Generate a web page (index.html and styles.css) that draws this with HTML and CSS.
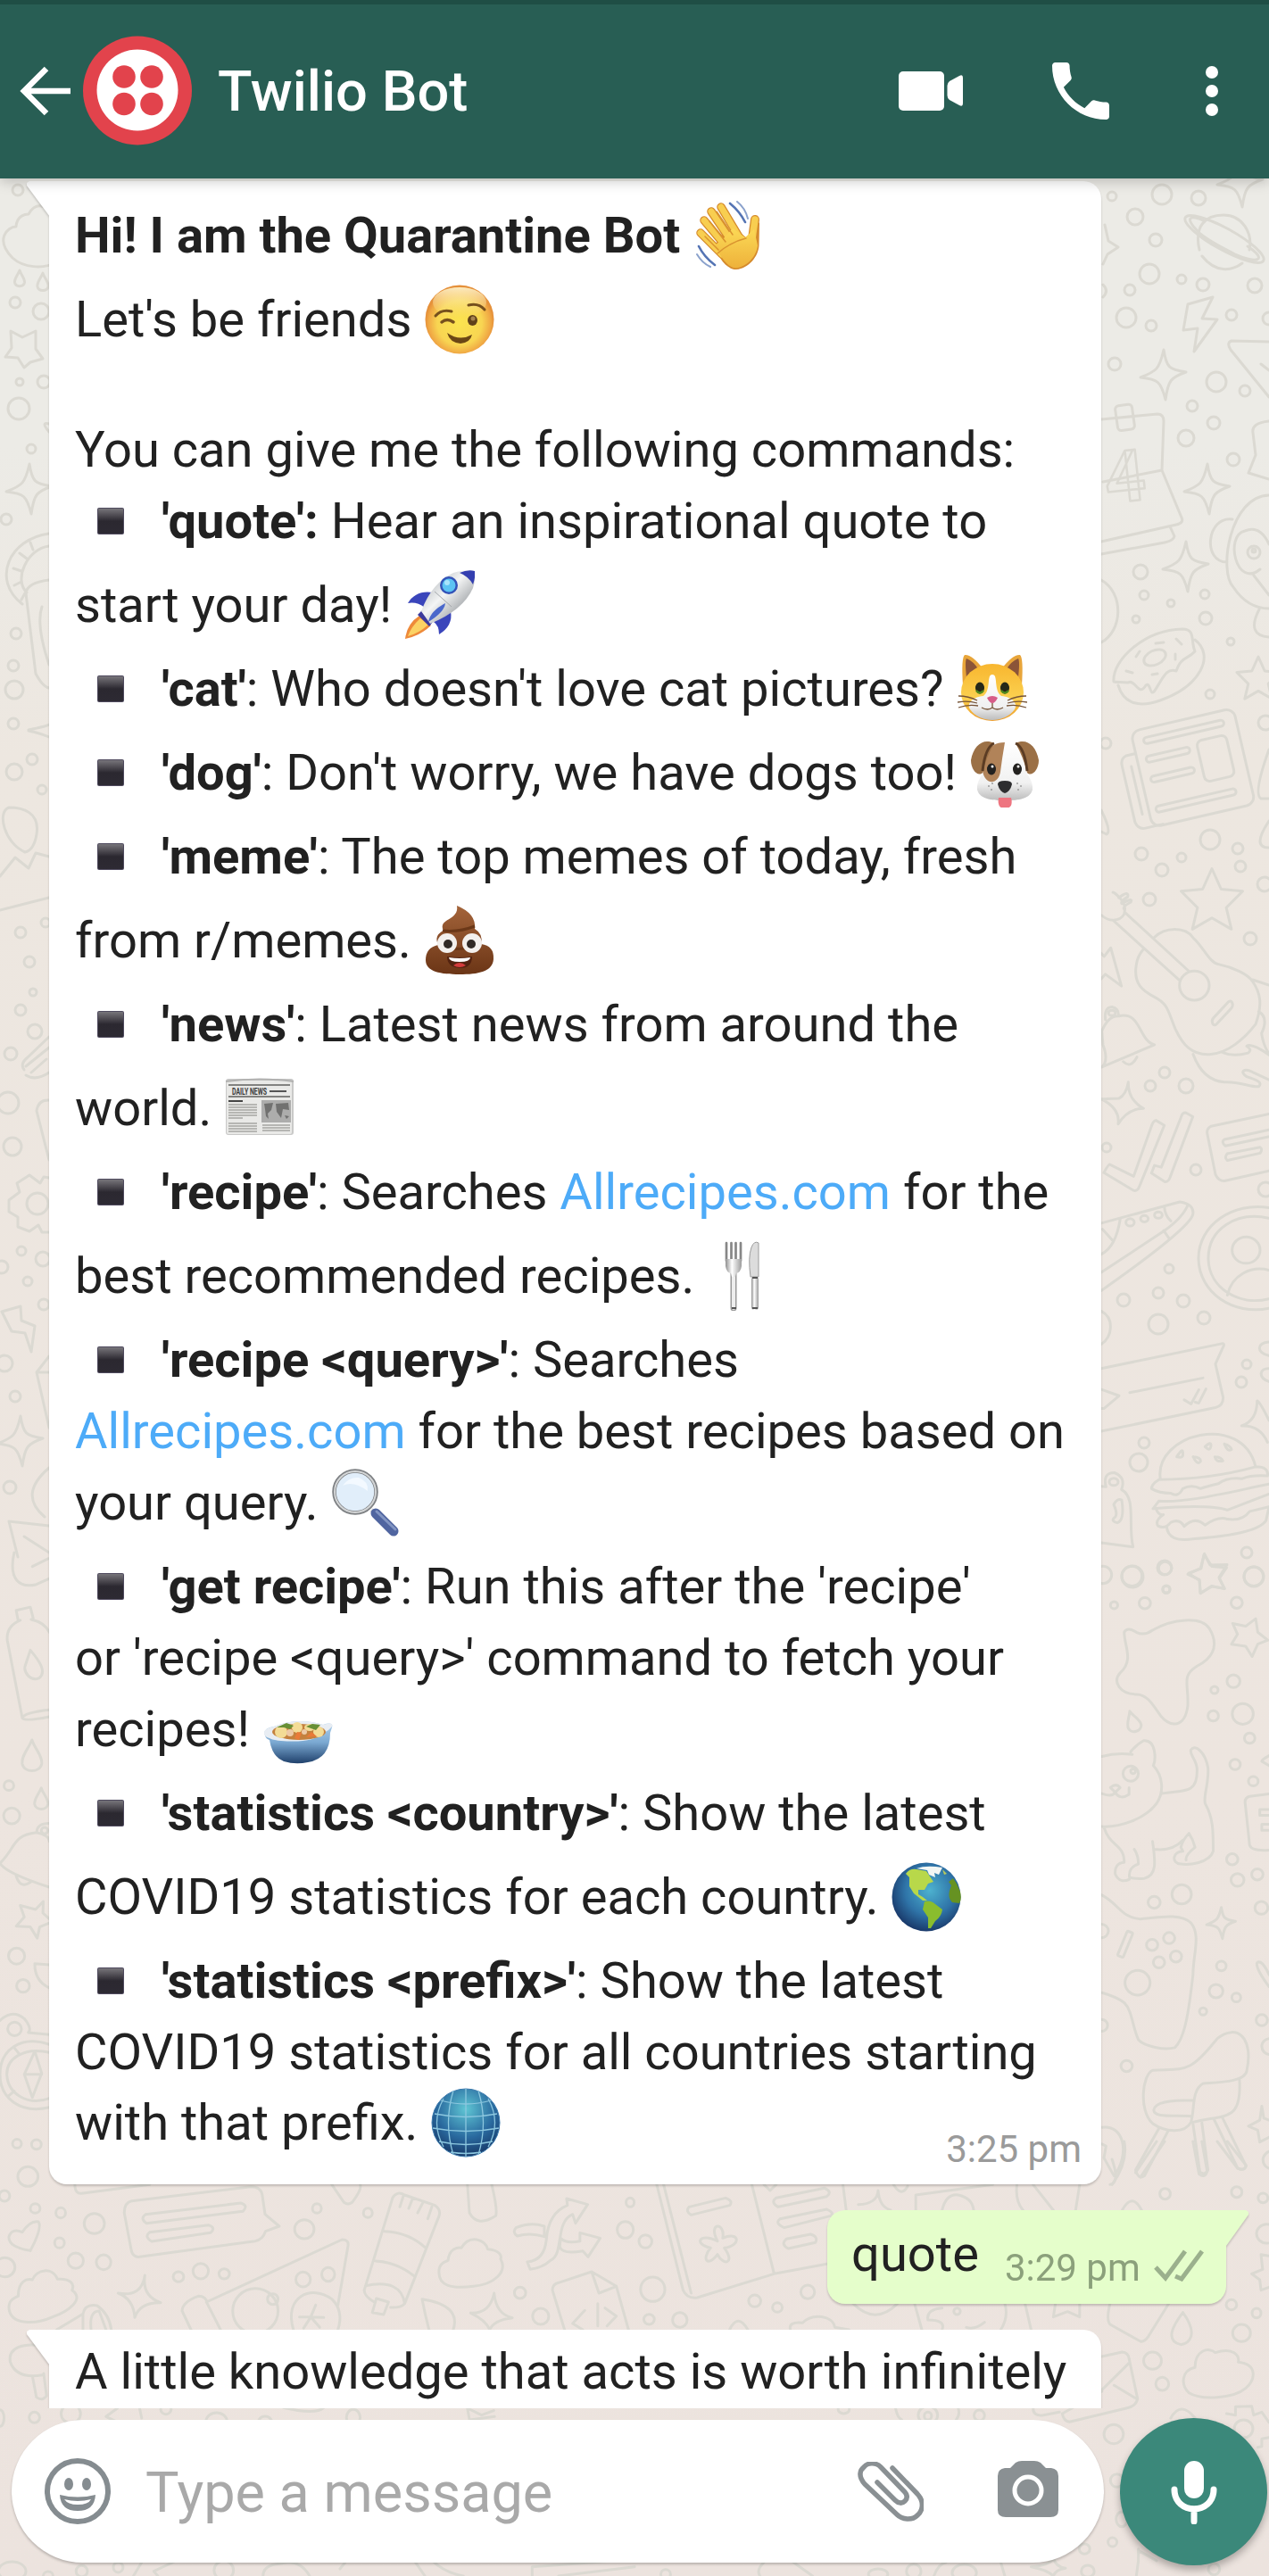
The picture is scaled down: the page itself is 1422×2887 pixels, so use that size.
FILE: index.html
```html
<!DOCTYPE html>
<html lang="en">
<head>
<meta charset="utf-8">
<title>Twilio Bot</title>
<link rel="stylesheet" href="styles.css">
</head>
<body>
<svg class="wallpaper" width="1422" height="2887" viewBox="0 0 1422 2887" aria-hidden="true">
  <defs>
    <path id="spark" d="M0-28C3-8 6-6 25-3C8 3 5 6 2 28C-3 8-6 5-26 3C-8-4-5-6 0-28Z"/>
    <path id="star" d="M0-30L9-10L30-8L14 8L19 29L0 18L-19 29L-14 8L-30-8L-9-10Z"/>
    <path id="cloud" d="M-32 25C-52 5-38-10-28-10C-27-23-17-24-14-24C-5-40 10-32 12-22C25-22 29-12 26-8C38-2 38 22 18 30C2 38-20 36-32 25Z"/>
    <path id="drop" d="M0-18C3-8 12 0 11 9C9 20-9 20-11 9C-12 0-4-8 0-18Z"/>
  </defs>
  <!-- right edge, upper part -->
  <g>
    <circle cx="1246" cy="220" r="5"/><circle cx="1302" cy="218" r="11"/><circle cx="1343" cy="222" r="8"/><circle cx="1272" cy="243" r="9"/><circle cx="1295" cy="269" r="7"/><circle cx="1288" cy="307" r="11"/><circle cx="1324" cy="313" r="5"/><circle cx="1348" cy="319" r="7"/><circle cx="1406" cy="320" r="8"/><circle cx="1266" cy="325" r="6"/><circle cx="1262" cy="356" r="11"/><circle cx="1290" cy="365" r="6"/><circle cx="1380" cy="353" r="6"/><circle cx="1249" cy="408" r="7"/><circle cx="1422" cy="357" r="7"/>
    <circle cx="1363" cy="428" r="11"/><circle cx="1395" cy="438" r="6"/><circle cx="1336" cy="455" r="6"/><circle cx="1360" cy="474" r="7"/><circle cx="1329" cy="491" r="9"/><circle cx="1382" cy="515" r="7"/><circle cx="1278" cy="641" r="8"/><circle cx="1282" cy="667" r="5"/><circle cx="1312" cy="676" r="4"/><circle cx="1350" cy="666" r="5"/><circle cx="1351" cy="693" r="7"/><circle cx="1273" cy="694" r="4"/><circle cx="1379" cy="719" r="4"/><circle cx="1356" cy="778" r="5"/><circle cx="1418" cy="810" r="8"/><circle cx="1239" cy="833" r="6"/><circle cx="1356" cy="941" r="11"/><circle cx="1279" cy="957" r="7"/><circle cx="1324" cy="961" r="5"/><circle cx="1387" cy="951" r="6"/><circle cx="1302" cy="975" r="7"/><circle cx="1390" cy="971" r="6"/><circle cx="1417" cy="991" r="8"/><circle cx="1288" cy="1008" r="7"/><circle cx="1401" cy="1052" r="7"/>
    <path d="M1344 280C1338 254 1350 241 1371 241C1392 241 1404 261 1400 280M1347 287C1362 306 1380 304 1392 295"/>
    <ellipse cx="1372" cy="268" rx="50" ry="12" transform="rotate(29 1372 268)"/><path d="M1345 262C1325 243 1334 240 1350 248M1398 276C1422 292 1408 296 1384 285C1366 276 1352 268 1345 262"/>
    <path d="M1331 341L1359 333L1347 357L1364 358L1338 394L1342 368L1326 370Z"/>
    <use href="#spark" x="1390" y="204"/><use href="#spark" x="1304" y="420"/><use href="#spark" x="1353" y="548"/><use href="#spark" x="1329" y="635"/>
    <path d="M1238 252L1242 270L1253 277L1241 285L1236 296M1236 319Q1243 326 1236 333"/>
    <path d="M1422 383L1380 382Q1374 384 1379 392L1422 445M1422 415L1413 408"/>
    <path d="M1234 470L1297 464Q1304 464 1304 472L1302 527L1324 580Q1327 586 1318 588L1234 607M1311 590L1316 601Q1315 606 1305 608L1234 621M1302 527L1236 540"/>
    <rect x="1251" y="454" width="19" height="28" rx="4" transform="rotate(-8 1260 468)"/>
    <text x="1238" y="562" class="doodle-num" transform="rotate(-6 1260 540)">4</text>
    <path d="M1422 472Q1402 474 1404 485L1407 510L1399 530L1422 537M1422 555C1378 556 1365 640 1382 658Q1398 682 1422 682M1381 582C1352 578 1347 630 1375 630M1412 638C1385 660 1372 600 1395 595Q1412 588 1422 610M1405 645L1422 667M1411 683Q1396 712 1422 714"/>
    <circle cx="1405" cy="619" r="7"/><circle cx="1405" cy="617" r="2"/>
    <path d="M1234 650C1260 665 1258 707 1234 720"/>
    <path d="M1248 764C1246 740 1282 706 1325 705C1340 705 1334 718 1339 730C1330 740 1324 735 1318 752C1308 748 1304 758 1294 774C1288 782 1290 764 1284 768C1276 782 1272 760 1264 765C1258 764 1252 765 1248 764ZM1339 717C1362 735 1345 769 1300 785C1272 795 1258 785 1253 768"/>
    <ellipse cx="1294" cy="737" rx="13" ry="8" transform="rotate(-25 1294 737)"/><path d="M1295 721L1304 720M1318 716L1324 722M1273 736L1277 730M1262 752L1269 754M1291 756L1297 755M1317 733L1317 739"/>
    <use href="#star" transform="translate(1410 760) scale(.8)"/>
    <g transform="rotate(-13 1330 862)"><rect x="1278" y="807" width="118" height="110" rx="10"/><path d="M1278 832H1267Q1260 834 1260 842V907Q1262 916 1270 916H1290M1270 845V900"/><rect x="1290" y="817" width="92" height="7" rx="3.500"/><rect x="1288" y="838" width="50" height="7" rx="3.500"/><rect x="1288" y="861" width="50" height="7" rx="3.500"/><rect x="1347" y="834" width="34" height="47" rx="6"/><rect x="1286" y="895" width="92" height="7" rx="3.500"/></g>
    <path d="M1234 908Q1246 932 1240 935L1234 932M1422 840Q1404 890 1413 895H1422M1422 920Q1402 950 1422 950"/>
    <use href="#star" transform="translate(1358 1008) scale(1.15)"/>
  </g>
  <!-- guitar, ticks, clarinet, burger -->
  <g>
    <circle cx="1289" cy="1217" r="6"/><circle cx="1305" cy="1202" r="6"/><circle cx="1329" cy="1217" r="8"/><circle cx="1240" cy="1286" r="5"/><circle cx="1340" cy="1311" r="6"/><circle cx="1310" cy="1422" r="5"/><circle cx="1259" cy="1457" r="7"/><circle cx="1298" cy="1449" r="6"/><circle cx="1326" cy="1458" r="7"/><circle cx="1349" cy="1477" r="7"/><circle cx="1298" cy="1484" r="11"/><circle cx="1397" cy="1529" r="5"/><circle cx="1391" cy="1549" r="6"/><circle cx="1282" cy="1617" r="6"/><circle cx="1276" cy="1639" r="10"/><circle cx="1397" cy="1740" r="6"/><circle cx="1305" cy="1757" r="8"/><circle cx="1269" cy="1767" r="12"/><circle cx="1405" cy="1767" r="11"/><circle cx="1307" cy="1781" r="4"/><circle cx="1418" cy="1333" r="8"/>
    <g transform="translate(1222 1000) scale(.33333 .5102)">
      <path d="M36 50C70 70 115 60 115 40C120 20 80 0 75 0M95 12Q130-5 125 10Q100 20 105 25Q145 10 135 22Q110 30 112 36M115 44L330 173M80 64L300 194M213 100C250 75 320 75 345 100C380 120 400 155 430 158C480 165 530 180 545 196C570 220 580 245 555 290C520 320 460 355 400 356C340 358 310 335 285 300C260 260 260 245 215 230C170 215 150 200 152 170C155 145 165 135 178 125M545 192L600 204M345 356C370 400 410 415 450 417C500 415 535 428 565 427C580 418 560 412 525 405C500 395 515 385 545 395L600 412M445 352Q480 362 530 353Q545 345 525 338Q540 330 600 357M565 262Q600 275 575 310Q580 335 600 355"/>
      <ellipse cx="349" cy="205" rx="50" ry="32"/><rect x="403" y="257" width="80" height="17" rx="10" transform="rotate(-35 443 265)"/>
      <path d="M36 190L50 180L104 206L68 122L46 141L36 134M38 305Q60 270 95 272C170 260 160 325 215 335L38 384Q62 370 42 335ZM110 372Q135 388 156 362M50 280Q45 253 72 252Q96 255 94 272"/><ellipse cx="72" cy="265" rx="12" ry="6"/>
      <path d="M36 454L95 453Q120 445 127 417Q125 455 178 475Q125 475 93 509Q100 475 36 454Z"/>
      <path d="M45 616L145 655Q158 658 165 645L248 512L220 501Q212 502 207 510L145 624L65 598Q60 598 45 616M205 617L250 636Q262 637 268 625L344 493L320 484Q308 484 305 493L238 604L215 600Z"/>
      <path d="M600 487L405 514Q388 520 393 532L420 620Q430 634 450 634L600 612M600 522L450 543Q438 548 453 557L598 537M460 574L570 560Q580 564 570 573L460 589Q448 583 460 574"/>
      <path d="M36 727L300 680Q350 685 344 708Q330 740 36 875M36 835L245 745Q310 715 328 686M248 690Q250 710 270 722M246 743L266 762M100 717Q85 780 36 795M40 740L73 764"/><ellipse cx="133" cy="725" rx="14" ry="8"/><ellipse cx="181" cy="717" rx="13" ry="7"/><ellipse cx="228" cy="709" rx="13" ry="7"/>
      <path d="M600 693C480 680 362 730 363 805C365 880 480 930 600 914M600 716C490 700 395 740 396 805C398 870 500 910 600 893M460 885C475 840 540 820 600 830"/><ellipse cx="523" cy="786" rx="47" ry="29"/>
      <path d="M36 920C80 935 75 975 36 993M36 1046L445 991Q452 992 445 1000L420 1036L446 1110Q446 1128 420 1132L36 1184M36 1092L96 1106L45 1134L36 1134M132 1099L378 1067M315 1115L338 1124L364 1093M352 1120L364 1122L388 1091"/>
      <path d="M600 988C560 990 555 1010 600 1018M600 1046C570 1045 560 1065 600 1075M508 1172Q560 1160 560 1117Q570 1120 600 1160M508 1172Q570 1170 595 1208"/>
      <path d="M235 1290C210 1190 510 1140 555 1262M230 1290Q400 1290 555 1262Q600 1262 595 1282Q540 1280 510 1288Q460 1284 430 1299Q390 1305 370 1310Q340 1300 310 1310Q295 1330 270 1320Q230 1320 205 1310Q205 1300 230 1290M210 1354L230 1337C320 1342 450 1320 600 1300M210 1354Q400 1344 460 1357L600 1322M220 1354Q230 1370 245 1367Q215 1380 227 1392Q250 1400 270 1384Q300 1375 315 1393Q350 1370 385 1390Q430 1370 460 1377Q510 1382 535 1360L600 1350M256 1393Q260 1430 350 1420Q560 1410 590 1380L600 1350"/>
      <path d="M290 1240Q310 1220 310 1230Q315 1245 290 1240M345 1240Q370 1240 370 1250Q360 1260 345 1240M385 1218Q405 1205 405 1215Q403 1230 385 1218M418 1240Q440 1240 445 1249Q420 1252 418 1240M450 1212Q470 1215 474 1224Q460 1230 450 1212"/>
      <path d="M36 1305L52 1306Q40 1275 80 1275Q120 1285 104 1312C155 1330 125 1390 143 1438L36 1429M78 1345Q90 1330 105 1335Q115 1380 90 1385Q70 1382 78 1375Q95 1370 78 1345"/><ellipse cx="78" cy="1295" rx="15" ry="8"/>
      <path d="M383 1453L402 1478L459 1477L432 1505L450 1530L407 1524L370 1540L366 1510L327 1498L370 1485Z"/>
    </g>
  </g>
  <!-- right edge, lower part -->
  <g transform="translate(711 1740) scale(.4535 .4464)">
    <path d="M1407 5L1427 35L1463 38L1445 65L1458 90L1427 85L1398 102L1396 70L1369 52L1400 40ZM1535 166L1540 200L1565 220L1540 230L1526 261L1510 235L1475 230L1490 205L1478 178L1510 185Z"/>
    <circle cx="1157" cy="56" r="22"/><circle cx="1229" cy="59" r="25"/><circle cx="1311" cy="39" r="16"/><circle cx="1314" cy="93" r="9"/><circle cx="1185" cy="132" r="9"/><circle cx="1261" cy="127" r="14"/><circle cx="1530" cy="60" r="24"/><circle cx="1488" cy="126" r="14"/><circle cx="1480" cy="323" r="16"/><circle cx="1433" cy="345" r="9"/><circle cx="1430" cy="410" r="13"/><circle cx="1503" cy="405" r="26"/><circle cx="1520" cy="466" r="13"/><circle cx="1484" cy="532" r="13"/><circle cx="1529" cy="574" r="12"/><circle cx="1477" cy="770" r="14"/><circle cx="1490" cy="822" r="16"/><circle cx="1539" cy="808" r="14"/><circle cx="1352" cy="858" r="24"/><circle cx="1284" cy="878" r="15"/><circle cx="1549" cy="892" r="16"/>
    <path d="M1210 200Q1218 185 1240 200Q1260 210 1280 195C1330 165 1400 160 1420 190C1450 240 1420 270 1390 285C1350 310 1370 330 1367 385C1360 440 1325 440 1300 410C1280 380 1265 355 1240 356C1200 355 1180 325 1200 302C1235 270 1210 235 1210 200Z"/>
    <use href="#drop" transform="translate(1232 424) scale(1.5) rotate(-18)"/>
    <path d="M1155 512Q1190 502 1230 507M1226 500Q1240 482 1258 472C1290 470 1288 520 1282 535C1305 560 1310 600 1290 630C1260 670 1200 690 1155 688M1303 605C1350 595 1390 610 1390 550C1392 520 1370 510 1375 495C1385 480 1410 500 1417 540C1420 580 1405 610 1410 630C1430 665 1430 700 1430 750C1420 780 1370 785 1350 782C1325 780 1330 750 1355 750L1350 740Q1355 720 1370 705Q1380 720 1385 740Q1360 760 1363 772M1285 745Q1330 750 1355 722M1280 725C1288 780 1290 810 1260 818Q1235 820 1223 815Q1220 790 1245 782Q1245 760 1235 745M1160 690C1175 740 1210 730 1210 778Q1185 780 1188 808Q1200 832 1223 820"/>
    <circle cx="1226" cy="555" r="19"/><circle cx="1232" cy="549" r="6"/><path d="M1176 590Q1190 578 1200 590L1188 602ZM1188 602Q1182 615 1155 605M1188 603Q1200 622 1222 607V590"/>
    <path d="M1568 606L1520 612Q1507 615 1509 630L1520 735Q1525 750 1568 747M1568 645H1545V660H1568M1568 682H1550V697H1568M1568 510Q1550 520 1550 524L1568 535"/>
    <path d="M1155 860C1200 885 1200 915 1250 920C1300 915 1350 905 1375 930C1400 960 1380 1010 1380 1060C1370 1150 1360 1220 1335 1243C1310 1250 1260 1240 1245 1223C1230 1190 1230 1150 1210 1130Q1190 1115 1155 1105"/>
    <rect x="1205" y="950" width="15" height="66" rx="3" transform="rotate(22 1212 983)"/>
    <circle cx="1279" cy="985" r="14"/><circle cx="1321" cy="968" r="14"/><circle cx="1338" cy="1014" r="14"/><circle cx="1296" cy="1029" r="14"/><circle cx="1243" cy="1080" r="31"/><circle cx="1450" cy="1038" r="12"/><circle cx="1437" cy="1101" r="17"/><circle cx="1487" cy="1117" r="11"/><circle cx="1405" cy="1152" r="9"/><circle cx="1550" cy="1174" r="14"/><circle cx="1216" cy="1289" r="14"/><circle cx="1570" cy="1240" r="20"/><circle cx="1154" cy="1187" r="15"/><circle cx="1154" cy="950" r="17"/><circle cx="1575" cy="1525" r="22"/>
    <use href="#spark" transform="translate(1450 930) scale(1.4)"/>
    <path d="M1568 1090Q1535 1045 1538 1030Q1550 1020 1568 1060"/>
    <path d="M1280 1300C1360 1295 1370 1310 1440 1220C1490 1180 1530 1220 1513 1300C1510 1330 1440 1330 1405 1333C1375 1350 1385 1400 1375 1430C1360 1460 1310 1455 1280 1433C1245 1400 1255 1310 1280 1300ZM1495 1325C1500 1430 1460 1410 1380 1430M1382 1375C1320 1375 1285 1380 1283 1400C1285 1418 1320 1413 1376 1415M1295 1447L1238 1550Q1245 1575 1260 1565L1318 1453M1380 1435L1397 1555Q1410 1565 1417 1550L1402 1432M1432 1423L1490 1545Q1505 1555 1511 1540L1452 1417"/>
    <path d="M1550 1390L1555 1420L1568 1425M1550 1390L1545 1425L1517 1440L1540 1450L1545 1480L1568 1468M1155 1443C1210 1435 1225 1510 1185 1565L1160 1520L1165 1490L1155 1485"/>
  </g>
  <!-- left edge -->
  <g>
    <circle cx="20" cy="213" r="6"/><circle cx="17" cy="339" r="6"/><circle cx="46" cy="349" r="9"/><circle cx="22" cy="428" r="4"/><circle cx="49" cy="428" r="7"/><circle cx="21" cy="458" r="12"/><circle cx="35" cy="503" r="5"/><circle cx="7" cy="582" r="6"/><circle cx="18" cy="710" r="6"/><circle cx="15" cy="746" r="6"/><circle cx="16" cy="773" r="10"/><circle cx="15" cy="811" r="6"/><circle cx="36" cy="851" r="6"/><circle cx="16" cy="865" r="9"/><circle cx="47" cy="885" r="5"/><circle cx="23" cy="1045" r="6"/><circle cx="51" cy="1034" r="5"/><circle cx="33" cy="1078" r="6"/><circle cx="37" cy="1112" r="4"/><circle cx="23" cy="1132" r="6"/><circle cx="39" cy="1156" r="8"/><circle cx="12" cy="1181" r="7"/><circle cx="9" cy="1236" r="12"/><circle cx="14" cy="1285" r="10"/><circle cx="24" cy="1402" r="5"/><circle cx="48" cy="1411" r="8"/><circle cx="2" cy="1420" r="7"/><circle cx="31" cy="1436" r="5"/><circle cx="49" cy="1462" r="6"/><circle cx="5" cy="1528" r="9"/><circle cx="17" cy="1565" r="6"/><circle cx="11" cy="1667" r="7"/>
    <use href="#cloud" transform="translate(46 264)"/><use href="#drop" transform="translate(22 312) scale(.5)"/><use href="#drop" transform="translate(48 316) scale(.55)"/>
    <path d="M12 371L25 378L40 371L40 391L48 402L34 406L27 412L20 401L6 400L13 390Z"/><use href="#spark" x="33" y="548"/>
    <path d="M55 598C10 604-10 650 25 677M55 612C30 615 15 650 30 664M34 608L37 616M22 620L30 626M15 637L24 640M16 656L24 652M24 672L29 663M29 665Q30 653 55 650M29 665L40 755Q48 770 55 771M47 680Q40 700 55 745M55 484Q45 472 55 475M32 818Q52 814 55 812M32 819Q46 822 55 826"/>
    <path d="M28 955C5 945-4 910 10 905C25 905 45 910 41 935Q38 953 28 955M40 956L55 960M40 956L32 973L17 961L0 982M0 1020L55 1006"/>
    <path d="M27 1199Q22 1192 31 1185L55 1162M29 1205Q40 1212 55 1202M29 1195L55 1174M35 1202L52 1187M41 1245Q43 1232 55 1233M41 1245L55 1300"/>
    <path d="M55 1320L49 1319L45 1326L33 1317L19 1326L22 1336L10 1345L10 1358L20 1364L20 1375L33 1380L43 1373L47 1381L55 1381"/><circle cx="42" cy="1349" r="12"/>
    <path d="M2 1470L23 1464L24 1480L39 1486L35 1515L28 1494L13 1492ZM55 1520L41 1538L55 1600M41 1538H55M55 1645Q20 1675 50 1700M10 1705L55 1710M10 1705L20 1745M27 1722L55 1740"/><use href="#spark" x="23" y="1615"/>
  </g>
  <g transform="translate(0 1740) scale(.4535 .4464)">
    <path d="M35 0C20 70 50 90 90 80L122 65M80 35L120 15M50 170Q15 185 18 220L55 415Q60 425 122 412M55 415Q60 402 122 395M77 168Q110 175 122 200M45 172L40 145L75 137L82 165M75 245C100 275 115 300 97 315C75 325 58 300 62 285Z"/>
    <use href="#drop" transform="translate(79 510) scale(2.200)"/><use href="#drop" transform="translate(102 618) scale(1.5)"/><circle cx="22" cy="585" r="12"/><circle cx="29" cy="661" r="20"/>
    <path d="M0 780C40 740 30 710 90 703Q122 710 122 725M0 780Q15 805 122 840M40 812Q50 845 75 828M91 703Q90 680 122 680"/><circle cx="110" cy="698" r="8"/>
    <path d="M107 876L106 905L122 920M107 876L88 896L50 886L60 915L40 938L75 940L92 968L98 940L122 930M122 1035L86 1032Q85 1075 122 1093"/><circle cx="41" cy="1013" r="20"/><circle cx="57" cy="1088" r="16"/><circle cx="36" cy="1196" r="17"/>
    <path d="M0 1175Q30 1145 60 1170Q80 1195 70 1205L122 1210M122 1235C50 1210 0 1250 0 1310C0 1370 50 1410 122 1393M122 1255C60 1240 15 1270 17 1312C20 1360 70 1390 122 1370M86 1252L60 1310L80 1368L103 1307ZM60 1310H103M35 1243L47 1258M20 1365L35 1352"/><circle cx="42" cy="1484" r="11"/><circle cx="90" cy="1486" r="12"/>
  </g>
  <!-- bottom band -->
  <g transform="translate(0 2400) scale(.4535 .33333)">
    <path d="M185 145Q185 180 205 174L370 145M325 200L620 152Q645 152 648 180L655 245L690 285L656 302Q650 330 630 335L345 388Q330 390 325 370L307 240Q307 205 325 200M360 245L595 207Q615 215 600 235L362 275Q345 260 360 245M370 305L515 281Q535 290 520 307L375 336Q355 320 370 305"/>
    <path d="M75 367Q20 355 22 320Q30 290 55 305Q75 265 95 270Q105 290 75 367M45 520C45 470 65 460 80 465C90 430 130 420 142 463C175 460 185 480 178 500C210 530 170 570 130 590C90 615 25 620 22 560C22 535 30 530 45 520"/>
    <path d="M292 510Q350 525 358 450Q350 520 397 542Q345 540 333 592Q330 530 292 510M510 540L845 330Q862 330 860 350L835 550M450 570Q450 540 490 520Q510 520 512 545L545 633M450 570L472 633M820 145L850 205Q860 215 870 205Q895 160 890 145"/>
    <ellipse cx="631" cy="570" rx="56" ry="76"/><ellipse cx="674" cy="530" rx="13" ry="18"/><path d="M725 633C700 520 770 480 820 530Q850 570 835 633M768 590L780 550M768 590L800 592M768 590L740 590M768 590L750 628M768 590L790 625"/>
    <path d="M970 190Q980 165 1000 180L1075 215Q1090 230 1085 250L1000 545Q990 560 965 558M970 190L900 500Q900 520 925 540M997 182L988 220M1020 190L1010 225M1045 205L1032 240M1067 220L1057 260M950 302Q1010 305 1052 358M928 402Q980 405 1024 453M903 485Q990 460 1000 545M930 528L960 540L948 582L920 575ZM1155 145L1160 240Q1180 290 1225 250Q1230 230 1215 145"/>
    <path d="M1107 400C1110 360 1130 355 1140 358C1160 310 1200 330 1205 362C1235 365 1240 385 1237 395C1255 440 1220 480 1170 487C1120 495 1080 490 1085 430C1088 410 1095 408 1107 400M1163 577Q1210 580 1221 510Q1225 580 1266 593Q1220 600 1210 633Q1200 600 1163 577M1043 530Q1050 580 1060 633M1043 530Q1140 550 1120 633"/>
    <path d="M1275 290Q1310 270 1345 285V320Q1310 305 1278 318Q1265 305 1275 290M1303 405Q1345 400 1350 330Q1355 240 1402 215L1400 192L1452 212L1422 275L1415 245C1370 270 1395 380 1360 400Q1340 425 1310 430ZM1385 325Q1400 345 1433 335V307L1483 325L1453 388L1440 368Q1390 380 1383 355ZM1395 633L1365 500Q1365 480 1380 475L1462 438L1523 487L1553 633M1462 438L1480 510L1523 487M1445 568L1415 612L1440 633M1477 545V620M1495 560L1523 587L1500 620"/>
    <path d="M25 740C20 690 60 680 95 685M25 740Q40 800 105 785M80 788L90 860Q105 875 115 855L108 780M140 633L205 580Q210 545 240 552Q270 580 275 633M205 580V633M225 633Q220 570 245 570L262 633"/>
    <ellipse cx="69" cy="118" rx="25" ry="33"/><ellipse cx="11" cy="183" rx="13" ry="18"/><ellipse cx="87" cy="225" rx="12" ry="16"/><ellipse cx="150" cy="240" rx="12" ry="17"/><ellipse cx="233" cy="276" rx="25" ry="34"/><ellipse cx="147" cy="341" rx="12" ry="17"/><ellipse cx="187" cy="401" rx="19" ry="26"/><ellipse cx="256" cy="406" rx="18" ry="25"/><ellipse cx="12" cy="423" rx="25" ry="32"/><ellipse cx="441" cy="455" rx="13" ry="17"/><ellipse cx="496" cy="436" rx="19" ry="26"/><ellipse cx="554" cy="445" rx="13" ry="17"/><ellipse cx="752" cy="295" rx="24" ry="32"/><ellipse cx="783" cy="225" rx="11" ry="16"/><ellipse cx="909" cy="240" rx="11" ry="16"/><ellipse cx="749" cy="464" rx="18" ry="25"/><ellipse cx="811" cy="447" rx="16" ry="23"/><ellipse cx="1285" cy="509" rx="14" ry="19"/><ellipse cx="1336" cy="588" rx="20" ry="27"/><ellipse cx="1545" cy="297" rx="20" ry="28"/><ellipse cx="1557" cy="205" rx="10" ry="15"/>
    <ellipse cx="85" cy="928" rx="13" ry="18"/><ellipse cx="175" cy="915" rx="24" ry="32"/><ellipse cx="410" cy="900" rx="13" ry="17"/><ellipse cx="535" cy="942" rx="26" ry="30"/><ellipse cx="655" cy="942" rx="16" ry="18"/><ellipse cx="873" cy="928" rx="17" ry="27"/><ellipse cx="0" cy="930" rx="10" ry="28"/>
    <path d="M290 897L262 925L300 950M345 897L350 930M700 895Q780 920 800 895M1155 897L1160 935M1155 897L1190 920L1220 905M1165 935L1222 925"/>
    <ellipse cx="202" cy="1445" rx="14" ry="19"/><ellipse cx="292" cy="1432" rx="12" ry="17"/><ellipse cx="30" cy="1445" rx="34" ry="32"/><ellipse cx="553" cy="1442" rx="24" ry="32"/><ellipse cx="119" cy="1460" rx="12" ry="14"/><path d="M350 1415L330 1460M435 1410L380 1445L390 1461M650 1461Q650 1425 690 1420Q740 1400 765 1461M840 1437L855 1412M1025 1412L1050 1461M1070 1412Q1100 1450 1145 1461M1315 1461V1430L1568 1405M1380 1461L1568 1430"/>
  </g>
  <g transform="translate(711 2400) scale(.4535 .33333)">
    <path d="M55 145L120 500Q130 530 155 525L345 445L475 412M72 145L140 510M290 145L345 445M515 145L523 230M135 220L225 190Q245 200 235 215L140 247Q125 235 135 220M350 190L470 157Q490 170 475 185L355 220Q335 205 350 190M360 260L475 228Q495 240 485 250L370 290Q345 275 360 260M375 328L435 312Q455 320 447 340L380 360Q360 345 375 328"/>
    <path d="M205 335C180 270 225 270 218 325C260 300 265 350 222 358C250 410 220 420 205 380C180 425 165 395 188 358C145 345 160 305 205 335M553 212Q600 210 602 165Q605 220 633 231M695 231V180L885 145M760 231Q770 175 800 180Q835 190 838 231M945 145Q940 200 960 231M985 145L1035 231M1100 145L1090 231M1175 145Q1200 140 1180 60M1205 231Q1230 170 1253 231M320 145L335 165L350 145M640 145Q660 190 675 150"/>
    <path d="M1210 0Q1220 70 1180 145M1238 105L1290 0M1250 120L1310 0M1380 0L1395 110Q1410 125 1415 100L1402 0M1440 0L1490 90Q1510 100 1511 80L1465 0"/>
    <ellipse cx="1311" cy="176" rx="13" ry="18"/><ellipse cx="1488" cy="170" rx="13" ry="18"/><ellipse cx="1553" cy="190" rx="12" ry="16"/><ellipse cx="1562" cy="310" rx="25" ry="32"/><ellipse cx="27" cy="336" rx="16" ry="22"/><ellipse cx="45" cy="497" rx="30" ry="41"/><ellipse cx="297" cy="536" rx="15" ry="20"/><ellipse cx="353" cy="558" rx="12" ry="16"/><ellipse cx="428" cy="506" rx="17" ry="23"/><ellipse cx="36" cy="598" rx="13" ry="17"/><ellipse cx="112" cy="600" rx="18" ry="25"/><ellipse cx="797" cy="571" rx="8" ry="11"/><ellipse cx="1475" cy="549" rx="13" ry="17"/><ellipse cx="1537" cy="577" rx="11" ry="16"/><ellipse cx="1500" cy="644" rx="22" ry="29"/><ellipse cx="1280" cy="737" rx="22" ry="29"/><ellipse cx="1304" cy="815" rx="16" ry="22"/><ellipse cx="1184" cy="984" rx="24" ry="32"/><ellipse cx="1192" cy="1140" rx="16" ry="22"/><ellipse cx="1181" cy="1347" rx="11" ry="15"/><ellipse cx="1112" cy="1370" rx="13" ry="17"/><ellipse cx="1204" cy="1270" rx="14" ry="25"/><ellipse cx="1120" cy="1445" rx="16" ry="20"/><ellipse cx="1432" cy="1438" rx="14" ry="19"/>
    <path d="M540 545Q595 620 650 545M385 633Q380 605 415 610C440 575 490 585 495 625L530 633M235 633Q255 575 280 633M692 545L710 633M915 545Q925 590 905 633M725 600Q720 565 760 560M725 600Q770 600 760 633M865 608Q840 635 820 625M965 545L980 633M1040 545L1035 590L1070 572L1100 590V545M1175 545Q1165 600 1175 615L1250 672Q1260 675 1270 655L1320 545M1355 575C1395 650 1370 680 1350 683C1310 670 1330 620 1355 575"/>
    <path d="M1155 723L1205 708Q1220 710 1222 730L1243 865Q1240 890 1215 897L1075 943Q1060 940 1057 915M1155 835L1222 745M1185 820L1240 865M1155 840L1057 915M985 897Q985 925 1010 920L1050 910M645 897Q650 930 660 935M800 897Q805 920 795 935M1325 930Q1350 870 1385 930"/><ellipse cx="725" cy="920" rx="24" ry="30"/><ellipse cx="725" cy="923" rx="9" ry="13"/><ellipse cx="852" cy="921" rx="13" ry="18"/><ellipse cx="517" cy="900" rx="14" ry="15"/>
    <path d="M1385 760C1385 700 1420 690 1435 710C1480 690 1495 720 1492 742C1540 750 1535 800 1510 830C1480 865 1400 870 1370 845C1350 820 1350 770 1385 760M1568 385L1548 380L1552 430L1525 445L1545 465L1548 500L1568 490"/>
    <path d="M1485 892L1525 890L1530 920L1550 910L1568 945M1485 892V920L1463 915M1568 995L1550 1000V1025L1540 1028"/><ellipse cx="1505" cy="966" rx="23" ry="30"/>
    <path d="M980 1430Q1030 1425 1035 1400Q1040 1430 1065 1435Q1040 1440 1035 1461Q1020 1440 980 1430M320 1415Q300 1440 310 1461M390 1412L440 1461M740 1461Q750 1420 770 1415M905 1415L915 1461M1245 1370V1410L1240 1461M1245 1375L1290 1410"/><ellipse cx="815" cy="1450" rx="30" ry="28"/><ellipse cx="602" cy="1455" rx="24" ry="18"/><ellipse cx="690" cy="1445" rx="18" ry="24"/><ellipse cx="77" cy="1455" rx="12" ry="16"/>
  </g>
</svg>

<div class="app">
  <header class="topbar">
    <svg class="back" width="58" height="56" viewBox="0 0 58 56"><path d="M30 3L5 28L30 53M6 28H57" fill="none" stroke="#fff" stroke-width="6.500"/></svg>
    <svg class="avatar" width="122" height="123" viewBox="0 0 122 123"><circle cx="61" cy="61.500" r="61" fill="#e2434c"/><circle cx="61" cy="61" r="45.500" fill="#fff"/><g fill="#e2434c"><circle cx="46" cy="46" r="12.800"/><circle cx="77" cy="46" r="12.800"/><circle cx="46" cy="76.500" r="12.800"/><circle cx="77" cy="76.500" r="12.800"/></g></svg>
    <h1 class="name">Twilio Bot</h1>
    <svg class="video" width="73" height="46" viewBox="0 0 73 46" fill="#fff"><rect x="0" y="1" width="51" height="44" rx="5"/><path d="M54.500 17Q54.500 14 57 12L68 6Q72 4 72 8V37Q72 41 68 39L57 33Q54.500 31 54.500 28Z"/></svg>
    <svg class="phone" width="64" height="64" viewBox="3 3 18 18" fill="#fff"><path d="M6.620 10.790c1.440 2.830 3.760 5.140 6.590 6.590l2.200-2.200c.27-.27.670-.36 1.020-.24 1.120.37 2.330.57 3.570.57.550 0 1 .45 1 1V20c0 .55-.45 1-1 1-9.390 0-17-7.610-17-17 0-.55.45-1 1-1h3.500c.55 0 1 .45 1 1 0 1.250.2 2.450.57 3.570.11.35.030.74-.25 1.020l-2.200 2.200z"/></svg>
    <svg class="more" width="14" height="56" viewBox="0 0 14 56" fill="#fff"><circle cx="7" cy="7" r="7"/><circle cx="7" cy="28" r="7"/><circle cx="7" cy="49" r="7"/></svg>
  </header>

  <main class="chat">
    <svg width="0" height="0" class="defs">
      <defs>
        <linearGradient id="gBullet" x2="0" y2="1"><stop offset="0" stop-color="#77757a"/><stop offset=".5" stop-color="#2b2830"/><stop offset="1" stop-color="#2d2a33"/></linearGradient>
        <symbol id="bullet" viewBox="0 0 30 30"><rect width="30" height="30" rx="2" fill="#4f4a5e"/><rect x="1" y="1" width="28" height="28" rx="1" fill="url(#gBullet)"/></symbol>
        <radialGradient id="gFace" cx=".5" cy=".55" r=".5"><stop offset="0" stop-color="#fbe44f"/><stop offset=".65" stop-color="#f8d552"/><stop offset=".9" stop-color="#f0a844"/><stop offset="1" stop-color="#e5903a"/></radialGradient>
        <linearGradient id="gGloss" x2="0" y2="1"><stop offset="0" stop-color="#fff6cf" stop-opacity=".9"/><stop offset="1" stop-color="#fbe38a" stop-opacity="0"/></linearGradient>
        <linearGradient id="gHand" x2="0" y2="1"><stop offset="0" stop-color="#fbd956"/><stop offset="1" stop-color="#eeb13a"/></linearGradient>
        <linearGradient id="gPoop" x2="0" y2="1"><stop offset="0" stop-color="#a4643a"/><stop offset="1" stop-color="#6b3516"/></linearGradient>
        <linearGradient id="gCat" x2="0" y2="1"><stop offset="0" stop-color="#f8b62f"/><stop offset=".6" stop-color="#fbd04f"/><stop offset="1" stop-color="#ee9c28"/></linearGradient>
        <linearGradient id="gWhite" x2="0" y2="1"><stop offset="0" stop-color="#fff"/><stop offset=".7" stop-color="#f1f1f1"/><stop offset="1" stop-color="#bdbdbd"/></linearGradient>
        <radialGradient id="gSea" cx=".55" cy=".4" r=".6"><stop offset="0" stop-color="#4db2cf"/><stop offset=".6" stop-color="#2f74a8"/><stop offset="1" stop-color="#1a3b6c"/></radialGradient>
        <radialGradient id="gGlobe" cx=".5" cy=".3" r=".7"><stop offset="0" stop-color="#5fc6d4"/><stop offset=".6" stop-color="#2a6a9f"/><stop offset="1" stop-color="#173a69"/></radialGradient>
        <linearGradient id="gPot" x2="0" y2="1"><stop offset="0" stop-color="#b4d3ee"/><stop offset=".5" stop-color="#7ba9d2"/><stop offset="1" stop-color="#20416c"/></linearGradient>
        <linearGradient id="gMetal"><stop offset="0" stop-color="#8f8f8f"/><stop offset=".4" stop-color="#fff"/><stop offset="1" stop-color="#9c9c9c"/></linearGradient>
        <linearGradient id="gHull" x1=".2" y1=".2" x2=".8" y2=".8"><stop offset="0" stop-color="#c4c8cb"/><stop offset=".4" stop-color="#f4f5f5"/><stop offset="1" stop-color="#9a9ea2"/></linearGradient>
      </defs>
    </svg>

    <article class="bubble in first">
      <p class="line"><b>Hi! I am the Quarantine Bot</b> <svg class="emoji" viewBox="0 0 78 78"><g stroke-linecap="round" fill="none"><g stroke="#d58a2c"><path stroke-width="9.500" d="M31 7L52 42M20 12L43 46M12 22L38 53M8 36L32 60"/><path stroke-width="10" d="M69 21L65 50"/></g><path fill="#d58a2c" stroke="none" d="M22 50C28 62 36 77 48 77C62 76 73 62 73.500 50L74 24L60 42L46 30Z"/><g stroke="#f8ce50"><path stroke-width="7" d="M31 7L52 42M20 12L43 46M12 22L38 53M8 36L32 60"/><path stroke-width="7.500" d="M69 21L65 50"/></g><path fill="url(#gHand)" stroke="none" d="M24 50C31 64 39 75.500 48 75.500C60 74 71 62 72 50L68 32L58 41L44 31L34 42Z"/><path stroke="#d9932f" stroke-width="1.500" d="M28 55L13 40M36 46L18 23M44 38L26 12M59 42Q42 46 27 59"/><path stroke="#5474b4" stroke-width="2.600" d="M41 3Q52 12 58 24M6 51Q12 63 24 72"/><path stroke="#8ba2cc" stroke-width="2" d="M49 1Q58 8 61 20M4 60Q10 70 19 74"/></g></svg></p>
      <p class="line tall">Let's be friends <svg class="emoji" viewBox="0 0 78 78"><circle cx="39" cy="39" r="38.500" fill="url(#gFace)"/><ellipse cx="39" cy="20" rx="30" ry="17" fill="url(#gGloss)"/><g fill="none" stroke="#76501d" stroke-linecap="round"><path stroke-width="3" d="M12 35Q19 27 30 30M49 23Q60 20 67 28"/><path stroke-width="3.500" d="M19 42Q25 37 32 42"/></g><ellipse cx="53.500" cy="40" rx="5.500" ry="6" fill="#60401a"/><circle cx="54" cy="38" r="2.500" fill="#a58350"/><path d="M25 54Q39 64 53 56Q51 65 40 66Q28 65 25 54" fill="#6b4715"/></svg></p>
      <p class="line para">You can give me the following commands:</p>
      <p class="line"><svg class="bullet"><use href="#bullet"/></svg><b>'quote':</b> Hear an inspirational quote to</p>
      <p class="line tall">start your day! <svg class="emoji" viewBox="0 0 78 78"><path d="M31 25Q12 22 3 37Q13 35 22 42ZM51 46Q54 62 38 72Q38 62 32 58Z" fill="#3a45bb"/><path d="M16 51Q2 60 0 77Q16 74 29 62Z" fill="#ee8a3a"/><path d="M17 54Q7 63 3 74Q15 71 26 61Z" fill="#fbd264"/><path d="M14 50L27 63L31 58L19 45Z" fill="#3c3a9c"/><path d="M18 46Q30 14 54 3Q68-1 77 1Q79 12 76 20Q65 45 28 60Z" fill="url(#gHull)"/><path d="M61 3Q70-1 78 1Q79 8 76 16Q71 7 61 3" fill="#343fb0"/><path d="M33 24L52 41" stroke="#a5a9ad" stroke-width="1" fill="none"/><path d="M45 37Q44 47 26 58Q28 46 45 37" fill="#4a68cb"/><circle cx="49" cy="17" r="10" fill="#3353b8"/><circle cx="49" cy="17" r="7.500" fill="#5cc3f3"/><circle cx="47" cy="14" r="3" fill="#a9e4fb"/></svg></p>
      <p class="line tall"><svg class="bullet"><use href="#bullet"/></svg><b>'cat'</b>: Who doesn't love cat pictures? <svg class="emoji" viewBox="0 0 78 78"><path d="M6 35Q4 4 8 1Q16 0 29 17ZM72 35Q74 4 70 1Q62 0 49 17Z" fill="#e8a53a"/><path d="M10 26Q8 8 10 5Q18 8 24 18ZM68 26Q70 8 68 5Q60 8 54 18Z" fill="#8b5438"/><ellipse cx="39" cy="43" rx="35" ry="32" fill="url(#gCat)"/><path d="M39 23C32 23 38 40 29 47C16 48 10 56 14 62C25 78 53 78 64 62C68 56 62 48 49 47C40 40 46 23 39 23" fill="url(#gWhite)"/><ellipse cx="25" cy="38" rx="5" ry="6.500" fill="#262819"/><ellipse cx="53" cy="38" rx="5" ry="6.500" fill="#262819"/><path d="M21 41Q25 46 29 41M49 41Q53 46 57 41" stroke="#4f8a20" stroke-width="2.500" fill="none"/><path d="M33 49Q39 45 45 49Q42 55 39 55Q36 55 33 49" fill="#d65d88"/><path d="M39 55V60M27 60Q34 64 39 60Q44 64 51 60M22 52Q12 47 1 47M22 55Q12 52 0 54M23 58Q12 56 1 60M56 52Q66 47 77 47M56 55Q66 52 78 54M55 58Q66 56 77 60" stroke="#755235" stroke-width="1.300" fill="none"/></svg></p>
      <p class="line tall"><svg class="bullet"><use href="#bullet"/></svg><b>'dog'</b>: Don't worry, we have dogs too! <svg class="emoji" viewBox="0 0 78 78"><path d="M39 5C60 5 60 20 60 32C64 42 71 48 70 58C67 70 50 70 39 70C28 70 11 70 8 58C7 48 14 42 18 32C18 20 18 5 39 5Z" fill="url(#gWhite)"/><path d="M39 5C18 5 14 24 14 37C17 54 32 52 34 38Q36 22 39 5" fill="#b18359"/><path d="M27 6C15 0 4 8 1 25C1 36 9 44 14 39Q18 22 27 6M51 6C63 0 74 8 77 25C77 36 69 44 64 39Q60 22 51 6" fill="#9b7046"/><path d="M27 6C18 10 15 28 14 37M51 6C60 10 63 28 64 37" stroke="#5b3c24" stroke-width="3" fill="none"/><ellipse cx="24" cy="35" rx="5" ry="6.500" fill="#23211f"/><ellipse cx="53" cy="35" rx="5" ry="6.500" fill="#23211f"/><circle cx="25" cy="32" r="1.500" fill="#fff"/><circle cx="54" cy="32" r="1.500" fill="#fff"/><path d="M32 67H46Q49 79 39 79Q30 79 32 67" fill="#ee7580"/><path d="M31 52Q31 48 39 48Q47 48 47 52Q45 60 39 62Q33 60 31 52" fill="#2d2d2f"/><g fill="#9b9b9b"><circle cx="21" cy="54" r="1"/><circle cx="25" cy="51" r="1"/><circle cx="24" cy="58" r="1"/><circle cx="57" cy="54" r="1"/><circle cx="53" cy="51" r="1"/><circle cx="54" cy="58" r="1"/></g></svg></p>
      <p class="line tall"><svg class="bullet"><use href="#bullet"/></svg><b>'meme'</b>: The top memes of today, fresh</p>
      <p class="line tall">from r/memes. <svg class="emoji" viewBox="0 0 78 78"><path d="M36 0Q58 9 56 26Q66 32 63 43Q78 45 77 60C76 74 60 77 39 77C18 77 1 74 1 61Q1 47 15 44Q10 33 21 28C14 14 39 17 36 0Z" fill="url(#gPoop)"/><path d="M20 28Q38 30 56 23M15 44Q39 54 63 42" stroke="#6b3818" stroke-width="3" fill="none"/><circle cx="25" cy="42" r="11" fill="#f3f0ed"/><circle cx="53" cy="42" r="11" fill="#f3f0ed"/><circle cx="26" cy="43" r="5" fill="#302a26"/><circle cx="52" cy="43" r="5" fill="#302a26"/><path d="M25 57Q39 59 53 57Q53 70 39 70Q25 69 25 57" fill="#532310"/><path d="M27 58Q39 60 51 58Q51 63 39 63Q27 63 27 58" fill="#fff"/><path d="M32 67Q39 61 46 67Q39 71 32 67" fill="#d43c3c"/></svg></p>
      <p class="line tall"><svg class="bullet"><use href="#bullet"/></svg><b>'news'</b>: Latest news from around the</p>
      <p class="line tall">world. <svg class="emoji" viewBox="0 0 78 78"><rect x="1" y="6" width="76" height="63" rx="3" fill="#c9c9c8"/><rect x="2" y="8" width="73" height="60" rx="2" fill="#e9e9e7"/><path d="M1 9Q39 4 77 9" stroke="#b1b1b0" stroke-width="2" fill="none"/><path d="M4 13H73M4 26H73" stroke="#60605f" stroke-width="1.500"/><text x="8" y="23.500" class="masthead" textLength="39" lengthAdjust="spacingAndGlyphs">DAILY NEWS</text><path d="M50 20H69" stroke="#555" stroke-width="2"/><path d="M4 31H20" stroke="#444" stroke-width="2"/><path d="M4 35H36M4 38H36M4 41H36M4 44H36M4 47H36M4 50H20M4 56H36M4 59H36M4 62H36M4 65H36M42 58H73M42 61H73M42 64H73" stroke="#a5a5a3" stroke-width="1.300"/><rect x="41" y="30" width="33" height="25" fill="#adadac"/><path d="M44 34L54 33L52 41L48 45L49 51L46 48L45 40ZM57 34L71 33L72 41L65 40L63 50L58 43ZM67 47L72 48L69 51Z" fill="#717170"/></svg></p>
      <p class="line tall"><svg class="bullet"><use href="#bullet"/></svg><b>'recipe'</b>: Searches <a class="link">Allrecipes.com</a> for the</p>
      <p class="line tall">best recommended recipes. <svg class="emoji" viewBox="0 0 78 78"><g fill="none" stroke-linecap="round"><path d="M29 32V75" stroke="#9a9a9a" stroke-width="7"/><path d="M29 32V75" stroke="#eee" stroke-width="4"/><path d="M21 2V22M26.500 2V22M31.500 2V22M37 2V22" stroke="#878787" stroke-width="2.700"/></g><path d="M20 20H38V28Q37 35 32 36L31 40H27L26 36Q21 35 20 28Z" fill="url(#gMetal)"/><path d="M48 40Q45 18 49 7Q52-1 57 2V40Z" fill="#dcdcdc" stroke="#9c9c9c"/><rect x="49" y="40" width="8" height="37" rx="3" fill="url(#gMetal)"/><path d="M50 41H56M50 75H56M27 75H32" stroke="#555" stroke-width="2"/></svg></p>
      <p class="line tall"><svg class="bullet"><use href="#bullet"/></svg><b>'recipe &lt;query&gt;'</b>: Searches</p>
      <p class="line"><a class="link">Allrecipes.com</a> for the best recipes based on</p>
      <p class="line">your query. <svg class="emoji" viewBox="0 0 78 78"><path d="M45 47L73 75" stroke="#dbdbdd" stroke-width="5"/><path d="M50 51L70 71" stroke="#5065a0" stroke-width="11" stroke-linecap="round"/><path d="M51 49L72 69" stroke="#8295c2" stroke-width="3" stroke-linecap="round"/><circle cx="27" cy="27" r="23.500" fill="#e1eefa" stroke="#7e8184" stroke-width="4.500"/><circle cx="27" cy="27" r="23" fill="none" stroke="#d3d5d6" stroke-width="2"/><path d="M13 20Q20 10 31 11Q42 15 41 26Q25 14 13 20" fill="#f3f9ff"/></svg></p>
      <p class="line tall"><svg class="bullet"><use href="#bullet"/></svg><b>'get recipe'</b>: Run this after the 'recipe'</p>
      <p class="line">or 'recipe &lt;query&gt;' command to fetch your</p>
      <p class="line">recipes! <svg class="emoji" viewBox="0 0 78 78"><path d="M2 46Q-1 38 12 36Q39 25 67 34Q79 30 77 37L75 43Q75 72 50 76Q36 79 23 75Q10 70 7 51Q3 50 2 46" fill="url(#gPot)"/><path d="M1 44Q0 38 12 36Q39 25 67 34Q79 30 77 36Q73 41 68 43Q55 55 20 52Q10 51 7 49Q2 48 1 44" fill="#e8edf3"/><ellipse cx="40" cy="42" rx="30" ry="9" fill="#c4813e"/><g fill="#f3dc96"><circle cx="20" cy="42" r="7"/><circle cx="38" cy="37" r="6"/><circle cx="62" cy="42" r="6"/><ellipse cx="52" cy="37" rx="6" ry="4"/></g><path d="M15 37L26 32L34 35L30 39L23 37ZM48 36L55 33L64 34L59 40Z" fill="#678f35"/><path d="M35 49L38 42L43 43L40 51ZM48 48L54 42L60 47Z" fill="#e97a38"/><circle cx="30" cy="43" r="4" fill="#edcaa7"/><circle cx="46" cy="42" r="3" fill="#edcaa7"/></svg></p>
      <p class="line tall"><svg class="bullet"><use href="#bullet"/></svg><b>'statistics &lt;country&gt;'</b>: Show the latest</p>
      <p class="line tall">COVID19 statistics for each country. <svg class="emoji" viewBox="0 0 78 78"><circle cx="39" cy="39" r="38.500" fill="url(#gSea)"/><path d="M16 13Q20 7 28 8L39 10L47 22L41 24L37 31L30 31L30 36L35 39L40 43L35 43L25 35L20 27L20 17Z" fill="#b8d84a"/><path d="M28 7Q39 3 57 6L53 14L48 12L49 17L42 14L40 9Z" fill="#f2f6f3"/><path d="M37 44Q44 42 49 47L57 53Q56 61 49 66L44 74L41 74L41 62L35 53Z" fill="#8abd2e"/><path d="M69 18L73 24L77 33Q79 42 76 46L68 45Q63 40 65 32L67 26L64 22Z" fill="#669222"/><path d="M57 8L62 13L59 14Z" fill="#b8c95c"/></svg></p>
      <p class="line tall"><svg class="bullet"><use href="#bullet"/></svg><b>'statistics &lt;prefix&gt;'</b>: Show the latest</p>
      <p class="line">COVID19 statistics for all countries starting</p>
      <div class="last"><p class="line">with that prefix. <svg class="emoji" viewBox="0 0 78 78"><circle cx="39" cy="39" r="38" fill="url(#gGlobe)" stroke="#3a79ad"/><g fill="none" stroke="#8cc7df" stroke-width="1.300"><path d="M39 1V77M25 3Q14 39 25 75M53 3Q64 39 53 75M14 12Q-1 39 14 66M64 12Q79 39 64 66M11 14Q39 22 67 14M4 29Q39 36 74 29M2 45Q39 52 76 45M9 60Q39 67 69 60M22 72Q39 75 56 72"/></g></svg></p><time class="time">3:25 pm</time></div>
    </article>

    <article class="bubble out">
      <p class="reply">quote</p><time class="time">3:29 pm</time>
      <svg class="ticks" width="57" height="36" viewBox="0 0 57 36" fill="none" stroke="#9bb08d" stroke-width="5"><path d="M2 20L13 32L35 2M24 30L31 33L54 2"/></svg>
    </article>

    <article class="bubble in next"><p class="line">A little knowledge that acts is worth infinitely</p></article>
  </main>

  <footer class="composer">
    <div class="field">
      <svg class="smile" width="76" height="76" viewBox="0 0 76 76"><circle cx="38" cy="38" r="34" fill="none" stroke="#858c90" stroke-width="6"/><g fill="#858c90"><ellipse cx="28" cy="30" rx="5" ry="7"/><ellipse cx="48" cy="30" rx="5" ry="7"/><path d="M18 42Q38 47 58 42Q57 60 38 60Q19 60 18 42"/></g><path d="M23 47Q38 51 53 47Q50 53 38 53Q27 53 23 47" fill="#fff"/></svg>
      <span class="placeholder">Type a message</span>
      <svg class="clip" width="74" height="67" viewBox="0 0 74 67" fill="none" stroke="#8a9093" stroke-width="5.500" stroke-linecap="round" stroke-linejoin="round"><path d="M39 7L67 36C76 46 72 56 67 60C61 66 50 65 44 59L8 25C0 16 3 9 7 6C11 1 20 0 26 6L53 34C57 39 55 42 53 44C50 47 46 47 42 43L22 23"/></svg>
      <svg class="camera" width="70" height="65" viewBox="0 0 70 65"><path d="M9 9H15L21 3Q24 1 28 1H42Q46 1 49 3L55 9H61Q69 10 69 18V56Q69 64 60 64H10Q1 64 1 56V18Q1 10 9 9Z" fill="#8a9093"/><circle cx="35" cy="34" r="15" fill="#8a9093" stroke="#fff" stroke-width="5"/></svg>
    </div>
    <div class="mic"><svg width="52" height="72" viewBox="0 0 52 72"><rect x="15" y="1" width="22" height="42" rx="11" fill="#fff"/><path d="M4 33C4 62 48 62 48 33M26 55V69" fill="none" stroke="#fff" stroke-width="7" stroke-linecap="round"/></svg></div>
  </footer>
</div>
</body>
</html>
```
FILE: styles.css
```css
* { box-sizing: border-box; }

body {
  margin: 0;
  width: 1422px;
  height: 2887px;
  overflow: hidden;
  position: relative;
  font-family: Roboto, sans-serif;
  color: #212121;
  background: linear-gradient(#ecebe6 0, #ecebe6 500px, #ede7e0 850px, #ede5df 2000px, #ece3de 2887px);
}

h1, p { margin: 0; }
svg { display: block; flex: none; }

.wallpaper {
  position: absolute;
  inset: 0;
  fill: none;
  stroke: #dbd9d2;
  stroke-width: 3;
  stroke-linejoin: round;
  stroke-linecap: round;
}
.wallpaper * { vector-effect: non-scaling-stroke; }
.doodle-num { font: 700 80px Roboto, sans-serif; stroke-width: 2.5; }

.app {
  position: relative;
  height: 2887px;
  display: flex;
  flex-direction: column;
}

.topbar {
  position: relative;
  z-index: 2;
  flex: none;
  height: 200px;
  padding: 0 57px 2px 22px;
  border-top: 5px solid #1f4e45;
  background: #285e54;
  box-shadow: 0 3px 14px rgba(0, 0, 0, .22);
  display: flex;
  align-items: center;
}
.avatar { margin-left: 13px; }
.name {
  flex: 1;
  margin-left: 29px;
  font-size: 63.2px;
  font-weight: 500;
  line-height: 72px;
  color: #fff;
}
.phone { margin-left: 99px; }
.more { margin-left: 108px; }

.chat {
  flex: none;
  height: 2499px;
  overflow: hidden;
  display: flex;
  flex-direction: column;
  align-items: flex-start;
}
.defs { position: absolute; }

.bubble {
  position: relative;
  flex: none;
  border-radius: 20px;
  filter: drop-shadow(0 2px 1px rgba(0, 0, 0, .18));
}
.in {
  width: 1179px;
  margin-left: 55px;
  padding: 22px 22px 26px 29px;
  border-top-left-radius: 0;
  background: #fff;
}
.bubble::before {
  content: "";
  position: absolute;
  top: 0;
  width: 26px;
  height: 40px;
  background: inherit;
}
.in::before { left: -25px; clip-path: polygon(3px 0, 100% 0, 100% 100%, 0 5px, 0 2px); }
.out::before { right: -25px; clip-path: polygon(0 0, 23px 0, 26px 2px, 26px 5px, 1px 100%, 0 100%); }

.first { margin-top: 3px; height: 2245px; }
.line {
  height: 79.9px;
  font-size: 56.1px;
  line-height: 79.9px;
  white-space: nowrap;
}
.tall { margin-top: 14.1px; }
.para { margin-top: 66.6px; }
.link { color: #4dabf8; }
.emoji {
  display: inline-block;
  width: 78px;
  height: 78px;
  margin-left: 1px;
  vertical-align: -20px;
}
.bullet {
  display: inline-block;
  width: 30px;
  height: 30px;
  margin: 0 42px 0 25px;
  vertical-align: 4px;
}
.masthead { font: 700 11px Roboto, sans-serif; fill: #3b3b3b; }

.last { display: flex; justify-content: space-between; align-items: flex-end; }
.time {
  font-size: 42px;
  line-height: 48px;
  color: #9a9a9a;
}
.last .time { margin-bottom: -13px; }

.out {
  align-self: flex-end;
  width: 447px;
  height: 105px;
  margin: 29px 48px 29px 0;
  padding: 10px 24px 0 27px;
  border-top-right-radius: 0;
  background: #e5fecb;
  display: flex;
}
.reply { font-size: 56.1px; line-height: 78px; }
.out .time { margin: 31px 0 0 29px; color: #8ba07b; }
.ticks { margin: 34px 0 0 auto; }

.next { height: 120px; padding-top: 8px; }

.composer {
  flex: none;
  display: flex;
  padding: 11px 0 0 13px;
}
.field {
  width: 1224px;
  height: 160px;
  margin-top: 2px;
  padding: 0 50px 0 36px;
  border-radius: 80px;
  background: #fff;
  box-shadow: 0 2px 3px rgba(0, 0, 0, .22);
  display: flex;
  align-items: center;
}
.placeholder {
  flex: 1;
  margin: 4px 0 0 38px;
  font-size: 63px;
  line-height: 72px;
  color: #a9a9a9;
}
.camera { margin: 0 0 6px 82px; }
.mic {
  width: 165px;
  height: 165px;
  margin-left: 18px;
  border-radius: 50%;
  background: #3b887a;
  box-shadow: 0 5px 9px rgba(0, 0, 0, .28);
  display: flex;
  align-items: center;
  justify-content: center;
}
```
